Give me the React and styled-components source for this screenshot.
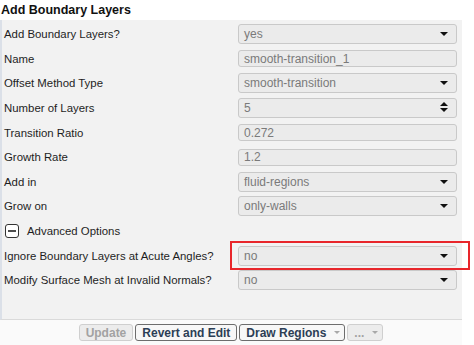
import styled, { createGlobalStyle } from "styled-components";

const GlobalStyle = createGlobalStyle`
  html, body {
    margin: 0;
    padding: 0;
    background: #ffffff;
  }
  body {
    font-family: "Liberation Sans", Arial, sans-serif;
    color: #1e1e1e;
  }
  * {
    box-sizing: border-box;
  }
`;

const Page = styled.div`
  width: 474px;
  height: 345px;
  overflow: hidden;
  display: flex;
  flex-direction: column;
  background: #ffffff;
`;

const Title = styled.div`
  flex: 0 0 20px;
  line-height: 20px;
  padding-left: 1px;
  font-size: 12.5px;
  font-weight: bold;
  color: #111;
`;

const Panel = styled.div`
  flex: 0 0 300px;
  width: 462px;
  padding-top: 2px;
  background: #f2f2f2;
  border-left: 2px solid #dbe0e8;
  border-bottom: 1px solid #dadada;
`;

const Row = styled.div`
  display: grid;
  grid-template-columns: 236px 219px;
  align-items: center;
  height: 24.6px;
`;

const Label = styled.div`
  padding-left: 2px;
  font-size: 11.4px;
  color: #1e1e1e;
  white-space: nowrap;
`;

const Field = styled.div`
  position: relative;
  height: ${(p) => (p.$text ? 17 : 20)}px;
  padding-left: 5px;
  display: flex;
  align-items: center;
  background: #ebebeb;
  border: 1px solid #c9c9c9;
  border-radius: 3px;
  font-size: 12px;
  color: #7a7a7a;
`;

const Arrow = styled.span`
  position: absolute;
  right: 8px;
  top: 50%;
  margin-top: -2px;
  width: 0;
  height: 0;
  border-left: 4px solid transparent;
  border-right: 4px solid transparent;
  border-top: 4px solid #111;
`;

const Spinner = styled.span`
  position: absolute;
  right: 8px;
  top: 3px;
  display: flex;
  flex-direction: column;
  gap: 2px;
  &::before,
  &::after {
    content: "";
    width: 0;
    height: 0;
    border-left: 4px solid transparent;
    border-right: 4px solid transparent;
  }
  &::before {
    border-bottom: 4px solid #111;
  }
  &::after {
    border-top: 4px solid #111;
  }
`;

const Toggle = styled.div`
  display: flex;
  align-items: center;
  gap: 8px;
  padding-left: 3px;
  font-size: 11.4px;
  color: #1e1e1e;
`;

const Highlight = styled.div`
  position: relative;
  &::after {
    content: "";
    position: absolute;
    left: -8px;
    right: -13px;
    top: -5px;
    bottom: -4px;
    border: 2px solid #e8262b;
    pointer-events: none;
  }
`;

const Footer = styled.div`
  flex: 1;
  width: 462px;
  display: flex;
  align-items: center;
  justify-content: center;
  gap: 2px;
  background: #fafafa;
`;

const Button = styled.div`
  height: 17px;
  padding: 0 ${(p) => (p.$menu ? 4 : 6)}px 0 6px;
  display: flex;
  align-items: center;
  gap: 8px;
  border: 1px solid ${(p) => (p.$disabled ? "#cfcfcf" : "#6d6d6d")};
  border-radius: 3px;
  background: ${(p) => (p.$disabled ? "#ececec" : "#f7f7f7")};
  font-size: 12px;
  font-weight: bold;
  color: ${(p) => (p.$disabled ? "#a2a2a2" : "#2c3e55")};
  white-space: nowrap;
`;

const Caret = styled.span`
  width: 0;
  height: 0;
  border-left: 3px solid transparent;
  border-right: 3px solid transparent;
  border-top: 3px solid #a8a8a8;
`;

const MinusBox = () => (
  <svg width="14" height="14" viewBox="0 0 14 14">
    <rect x="0.5" y="0.5" width="13" height="13" rx="2.5" fill="#fff" stroke="#333" />
    <rect x="3" y="6.2" width="8" height="1.6" fill="#222" />
  </svg>
);

const rows = [
  { label: "Add Boundary Layers?", value: "yes", kind: "select" },
  { label: "Name", value: "smooth-transition_1", kind: "text" },
  { label: "Offset Method Type", value: "smooth-transition", kind: "select" },
  { label: "Number of Layers", value: "5", kind: "spin" },
  { label: "Transition Ratio", value: "0.272", kind: "text" },
  { label: "Growth Rate", value: "1.2", kind: "text" },
  { label: "Add in", value: "fluid-regions", kind: "select" },
  { label: "Grow on", value: "only-walls", kind: "select" },
];

const advanced = [
  { label: "Ignore Boundary Layers at Acute Angles?", value: "no", kind: "select", marked: true },
  { label: "Modify Surface Mesh at Invalid Normals?", value: "no", kind: "select" },
];

const Input = ({ value, kind }) => (
  <Field $text={kind === "text"}>
    {value}
    {kind === "select" && <Arrow />}
    {kind === "spin" && <Spinner />}
  </Field>
);

const FormRow = ({ label, value, kind, marked }) => (
  <Row>
    <Label>{label}</Label>
    {marked ? (
      <Highlight>
        <Input value={value} kind={kind} />
      </Highlight>
    ) : (
      <Input value={value} kind={kind} />
    )}
  </Row>
);

export default function App() {
  return (
    <Page>
      <GlobalStyle />
      <Title>Add Boundary Layers</Title>
      <Panel>
        {rows.map((r) => (
          <FormRow key={r.label} {...r} />
        ))}
        <Row>
          <Toggle>
            <MinusBox />
            Advanced Options
          </Toggle>
        </Row>
        {advanced.map((r) => (
          <FormRow key={r.label} {...r} />
        ))}
      </Panel>
      <Footer>
        <Button $disabled>Update</Button>
        <Button>Revert and Edit</Button>
        <Button $menu>
          Draw Regions
          <Caret />
        </Button>
        <Button $disabled $menu>
          ...
          <Caret />
        </Button>
      </Footer>
    </Page>
  );
}
